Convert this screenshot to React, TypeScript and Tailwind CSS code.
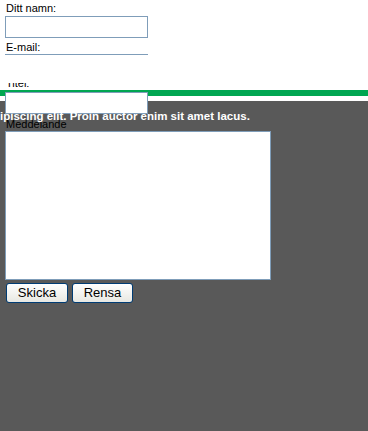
import React from "react";

export default function App() {
  const font = { fontFamily: '"Liberation Sans", Arial, sans-serif' };
  return (
    <div
      className="relative w-[368px] h-[431px] overflow-hidden bg-white flex flex-col"
      style={font}
    >
      {/* top white form area */}
      <div className="h-[90px] flex flex-col pl-[5px] pt-[2px] text-[11px] leading-[13px] text-black">
        <div className="pl-[1px]">Ditt namn:</div>
        <input
          className="mt-[1px] w-[143px] h-[22px] border border-[#7f9db9] bg-white outline-none"
          aria-label="Ditt namn"
        />
        <div className="mt-[3px] pl-[1px]">E-mail:</div>
        <div className="h-[1px] w-[143px] bg-[#7f9db9]" />
        <div className="mt-[28px] h-[5px] overflow-hidden pl-[1px]">
          <div className="-mt-[6px]">Titel:</div>
        </div>
      </div>
      <div className="h-[6px] bg-[#00a651]" />
      <div className="h-[5px] bg-white" />
      {/* gray area */}
      <div className="flex-1 bg-[#595959] flex flex-col pt-[17px] text-[11px] leading-[13px]">
        <div className="pl-[6px] text-black">Meddelande</div>
        <textarea
          className="ml-[5px] w-[266px] h-[149px] border border-[#7f9db9] bg-white resize-none outline-none"
          aria-label="Meddelande"
        />
        <div className="mt-[3px] flex gap-[4px] pl-[6px]">
          <button className="w-[62px] h-[20px] rounded-[3px] border border-[#003c74] bg-gradient-to-b from-white to-[#e8e8e2] text-[13px] leading-[18px] text-black">
            Skicka
          </button>
          <button className="w-[61px] h-[20px] rounded-[3px] border border-[#003c74] bg-gradient-to-b from-white to-[#e8e8e2] text-[13px] leading-[18px] text-black">
            Rensa
          </button>
        </div>
      </div>
      {/* overlapping elements */}
      <input
        className="absolute left-[5px] top-[92px] w-[143px] h-[22px] border border-[#7f9db9] bg-white outline-none"
        aria-label="Titel"
      />
      <div className="absolute left-0 top-[109px] whitespace-nowrap text-[11.5px] leading-[14px] font-bold text-white">
        ipiscing elit. Proin auctor enim sit amet lacus.
      </div>
    </div>
  );
}
